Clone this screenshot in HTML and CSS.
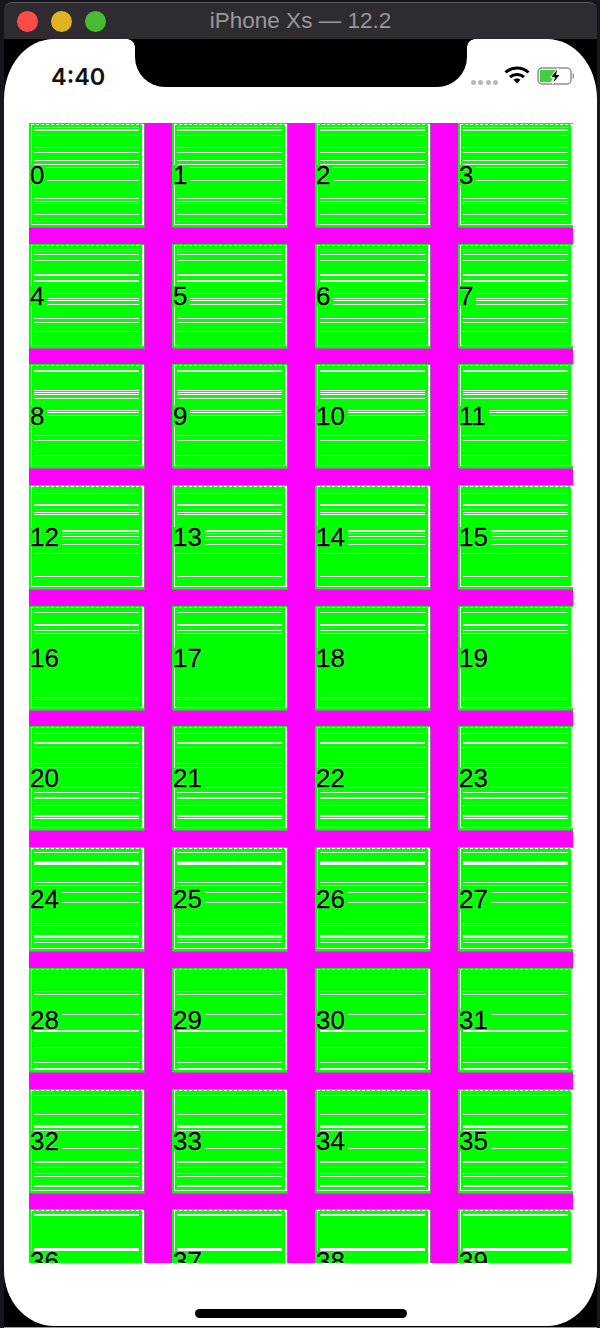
FILE: index.html
```html
<!DOCTYPE html>
<html lang="en">
<head>
    <meta charset="UTF-8">
    <meta name="viewport" content="width=device-width, initial-scale=1.0">
    <title>iPhone Xs — 12.2</title>
    <link rel="stylesheet" href="styles.css">
</head>
<body>
    <div class="window">
        <div class="titlebar">
            <span class="light light-red"></span>
            <span class="light light-yellow"></span>
            <span class="light light-green"></span>
            <div class="title">iPhone Xs — 12.2</div>
        </div>
        <div class="screen">
            <div class="notch"></div>
            <div class="status">
                <div class="time">4:40</div>
                <div class="signal"><i></i><i></i><i></i><i></i></div>
                <svg class="wifi" width="26" height="18" viewBox="0 0 26 18">
                    <path d="M1.5 6.5C8 .5 18 .5 24.500 6.500" fill="none" stroke="#000" stroke-width="3"/>
                    <path d="M6 11C10 7.500 16 7.500 20 11" fill="none" stroke="#000" stroke-width="3"/>
                    <path d="M9.500 13.800L13 17.500L16.500 13.800C14.500 12.200 11.500 12.200 9.500 13.800Z" fill="#000"/>
                </svg>
                <svg class="battery" width="38" height="18" viewBox="0 0 38 18">
                    <rect x="1" y="1" width="33" height="16" rx="4" fill="#fff" stroke="#8e8e8e" stroke-width="1.500"/>
                    <path d="M3 3H20L14 15H3Z" fill="#3fd23f"/>
                    <path d="M35.500 6.500h1.500v5h-1.500z" fill="#9a9a9a"/>
                    <path d="M21 1L13.500 10.500H17.500L15.500 17L23.500 7.500H19.500Z" fill="#000" stroke="#fff" stroke-width="1"/>
                </svg>
            </div>
            <div class="grid" id="grid"></div>
            <div class="home"></div>
        </div>
    </div>
    <script src="script.js"></script>
</body>
</html>
```

FILE: styles.css
```css
body {
    margin: 0;
    height: 100vh;
    overflow: hidden;
    background-color: #17161a;
    font-family: "Liberation Sans", Arial, sans-serif;
}

.window {
    margin: 2px 3px 0 4px;
    height: 1325px;
    background-color: #000;
    border-radius: 8px 8px 0 0;
    border-bottom: 1px solid #9a9a9a;
}

.titlebar {
    display: flex;
    align-items: center;
    gap: 13px;
    height: 37px;
    padding-left: 13px;
    background-color: #2e2c30;
    border-top: 1px solid #59575b;
    box-sizing: border-box;
    border-radius: 8px 8px 0 0;
    position: relative;
}

.light {
    width: 21px;
    height: 21px;
    border-radius: 50%;
}

.light-red {
    background-color: #fb4d47;
}

.light-yellow {
    background-color: #e0b327;
}

.light-green {
    background-color: #48bb30;
}

.title {
    position: absolute;
    left: 0;
    right: 0;
    top: 5px;
    text-align: center;
    font-size: 22.500px;
    color: #99989b;
}

.screen {
    position: relative;
    height: 1287px;
    background-color: #fff;
    border-radius: 50px 50px 50px 50px / 60px 60px 56px 56px;
    overflow: hidden;
}

.notch {
    position: absolute;
    left: 131px;
    top: 0;
    width: 332px;
    height: 48px;
    background-color: #000;
    border-radius: 0 0 30px 30px;
}

.notch::before,
.notch::after {
    content: "";
    position: absolute;
    top: 0;
    width: 8px;
    height: 8px;
}

.notch::before {
    left: -8px;
    background: radial-gradient(circle at 0 100%, #fff 7.500px, #000 8px);
}

.notch::after {
    right: -8px;
    background: radial-gradient(circle at 100% 100%, #fff 7.500px, #000 8px);
}

.status {
    display: flex;
    align-items: center;
    height: 84px;
    padding: 0 0 21px 47px;
    box-sizing: border-box;
}

.time {
    width: 420px;
    padding-top: 11px;
    font-family: Inter, sans-serif;
    font-weight: 600;
    font-size: 23.500px;
    color: #111;
}

.signal {
    display: flex;
    gap: 2.300px;
    margin-top: 23px;
    width: 33px;
}

.signal i {
    width: 5px;
    height: 5px;
    border-radius: 50%;
    background-color: #b9b9b9;
}

.wifi {
    margin-top: 8px;
}

.battery {
    margin: 10px 0 0 7px;
}

.grid {
    display: grid;
    grid-template-columns: repeat(4, 115px);
    grid-auto-rows: 104px;
    column-gap: 28px;
    row-gap: 16.700px;
    margin-left: 25px;
    width: 544px;
    height: 1140px;
    overflow: hidden;
    background-color: #ff00ff;
}

.cell {
    position: relative;
    display: flex;
    align-items: center;
    background-color: #00ff00;
    box-shadow: 1px 1px 0 #8c7a8c;
}

.cell::after {
    content: "";
    position: absolute;
    left: 2px;
    right: 0;
    top: 1px;
    bottom: 2px;
    border-left: 1px solid #fff;
    border-right: 2px solid #fff;
    border-bottom: 1px solid #fff;
    border-top: 1px dashed #fff;
}

.line {
    position: absolute;
    left: 5px;
    right: 5px;
    background-color: #fff;
}

.num {
    position: relative;
    z-index: 1;
    padding: 0 3px 0 1px;
    font-size: 26px;
    line-height: 20px;
    color: #000;
    background-color: #00ff00;
    -webkit-text-stroke: 0.3px #000;
    text-shadow: 0 0 2px rgba(255, 255, 255, 0.7);
}

.home {
    width: 212px;
    height: 9px;
    margin: 46px 0 0 191px;
    border-radius: 5px;
    background-color: #000;
}
```

FILE: script.js
```js
// white lines in each row of cells: [offset from cell top, thickness]
var rowLines = [
    [[4, 1], [6, 1], [7, 1], [12, 1], [24, 1], [29, 1], [37, 1], [41, 1], [44, 1], [57, 1], [75, 1], [78, 1], [80, 1], [91, 1], [98, 1]],
    [[5, 1], [7, 1], [10, 1], [16, 1], [30, 2], [36, 2], [49, 1], [54, 1], [56, 1], [60, 1], [74, 1], [78, 1], [87, 1]],
    [[6, 2], [26, 1], [28, 1], [30, 1], [34, 1], [46, 1], [48, 1], [51, 1], [71, 1], [76, 1], [91, 1]],
    [[8, 1], [19, 2], [24, 1], [27, 1], [29, 1], [45, 2], [48, 1], [51, 1], [54, 1], [59, 1], [68, 1], [91, 1]],
    [[6, 1], [18, 2], [24, 1], [27, 1], [91, 1], [93, 1]],
    [[7, 1], [16, 1], [17, 1], [21, 1], [37, 1], [41, 1], [61, 1], [66, 1], [71, 2], [79, 1], [89, 2], [92, 1]],
    [[5, 1], [14, 3], [17, 1], [35, 1], [38, 1], [45, 1], [55, 1], [76, 1], [78, 1], [88, 3], [92, 1], [95, 1]],
    [[23, 1], [26, 1], [46, 1], [62, 2], [79, 1], [94, 1], [100, 1]],
    [[6, 1], [25, 1], [36, 3], [41, 1], [59, 1], [72, 2], [78, 1], [84, 1], [87, 1], [96, 2]],
    [[5, 2], [39, 3]]
];

var grid = document.getElementById("grid");

for (var i = 0; i < 40; i++) {
    var cell = document.createElement("div");
    cell.className = "cell";

    var lines = rowLines[Math.floor(i / 4)];
    for (var j = 0; j < lines.length; j++) {
        var line = document.createElement("div");
        line.className = "line";
        line.style.top = lines[j][0] + "px";
        line.style.height = lines[j][1] + "px";
        cell.appendChild(line);
    }

    var num = document.createElement("span");
    num.className = "num";
    num.textContent = i;
    cell.appendChild(num);

    grid.appendChild(cell);
}
```
